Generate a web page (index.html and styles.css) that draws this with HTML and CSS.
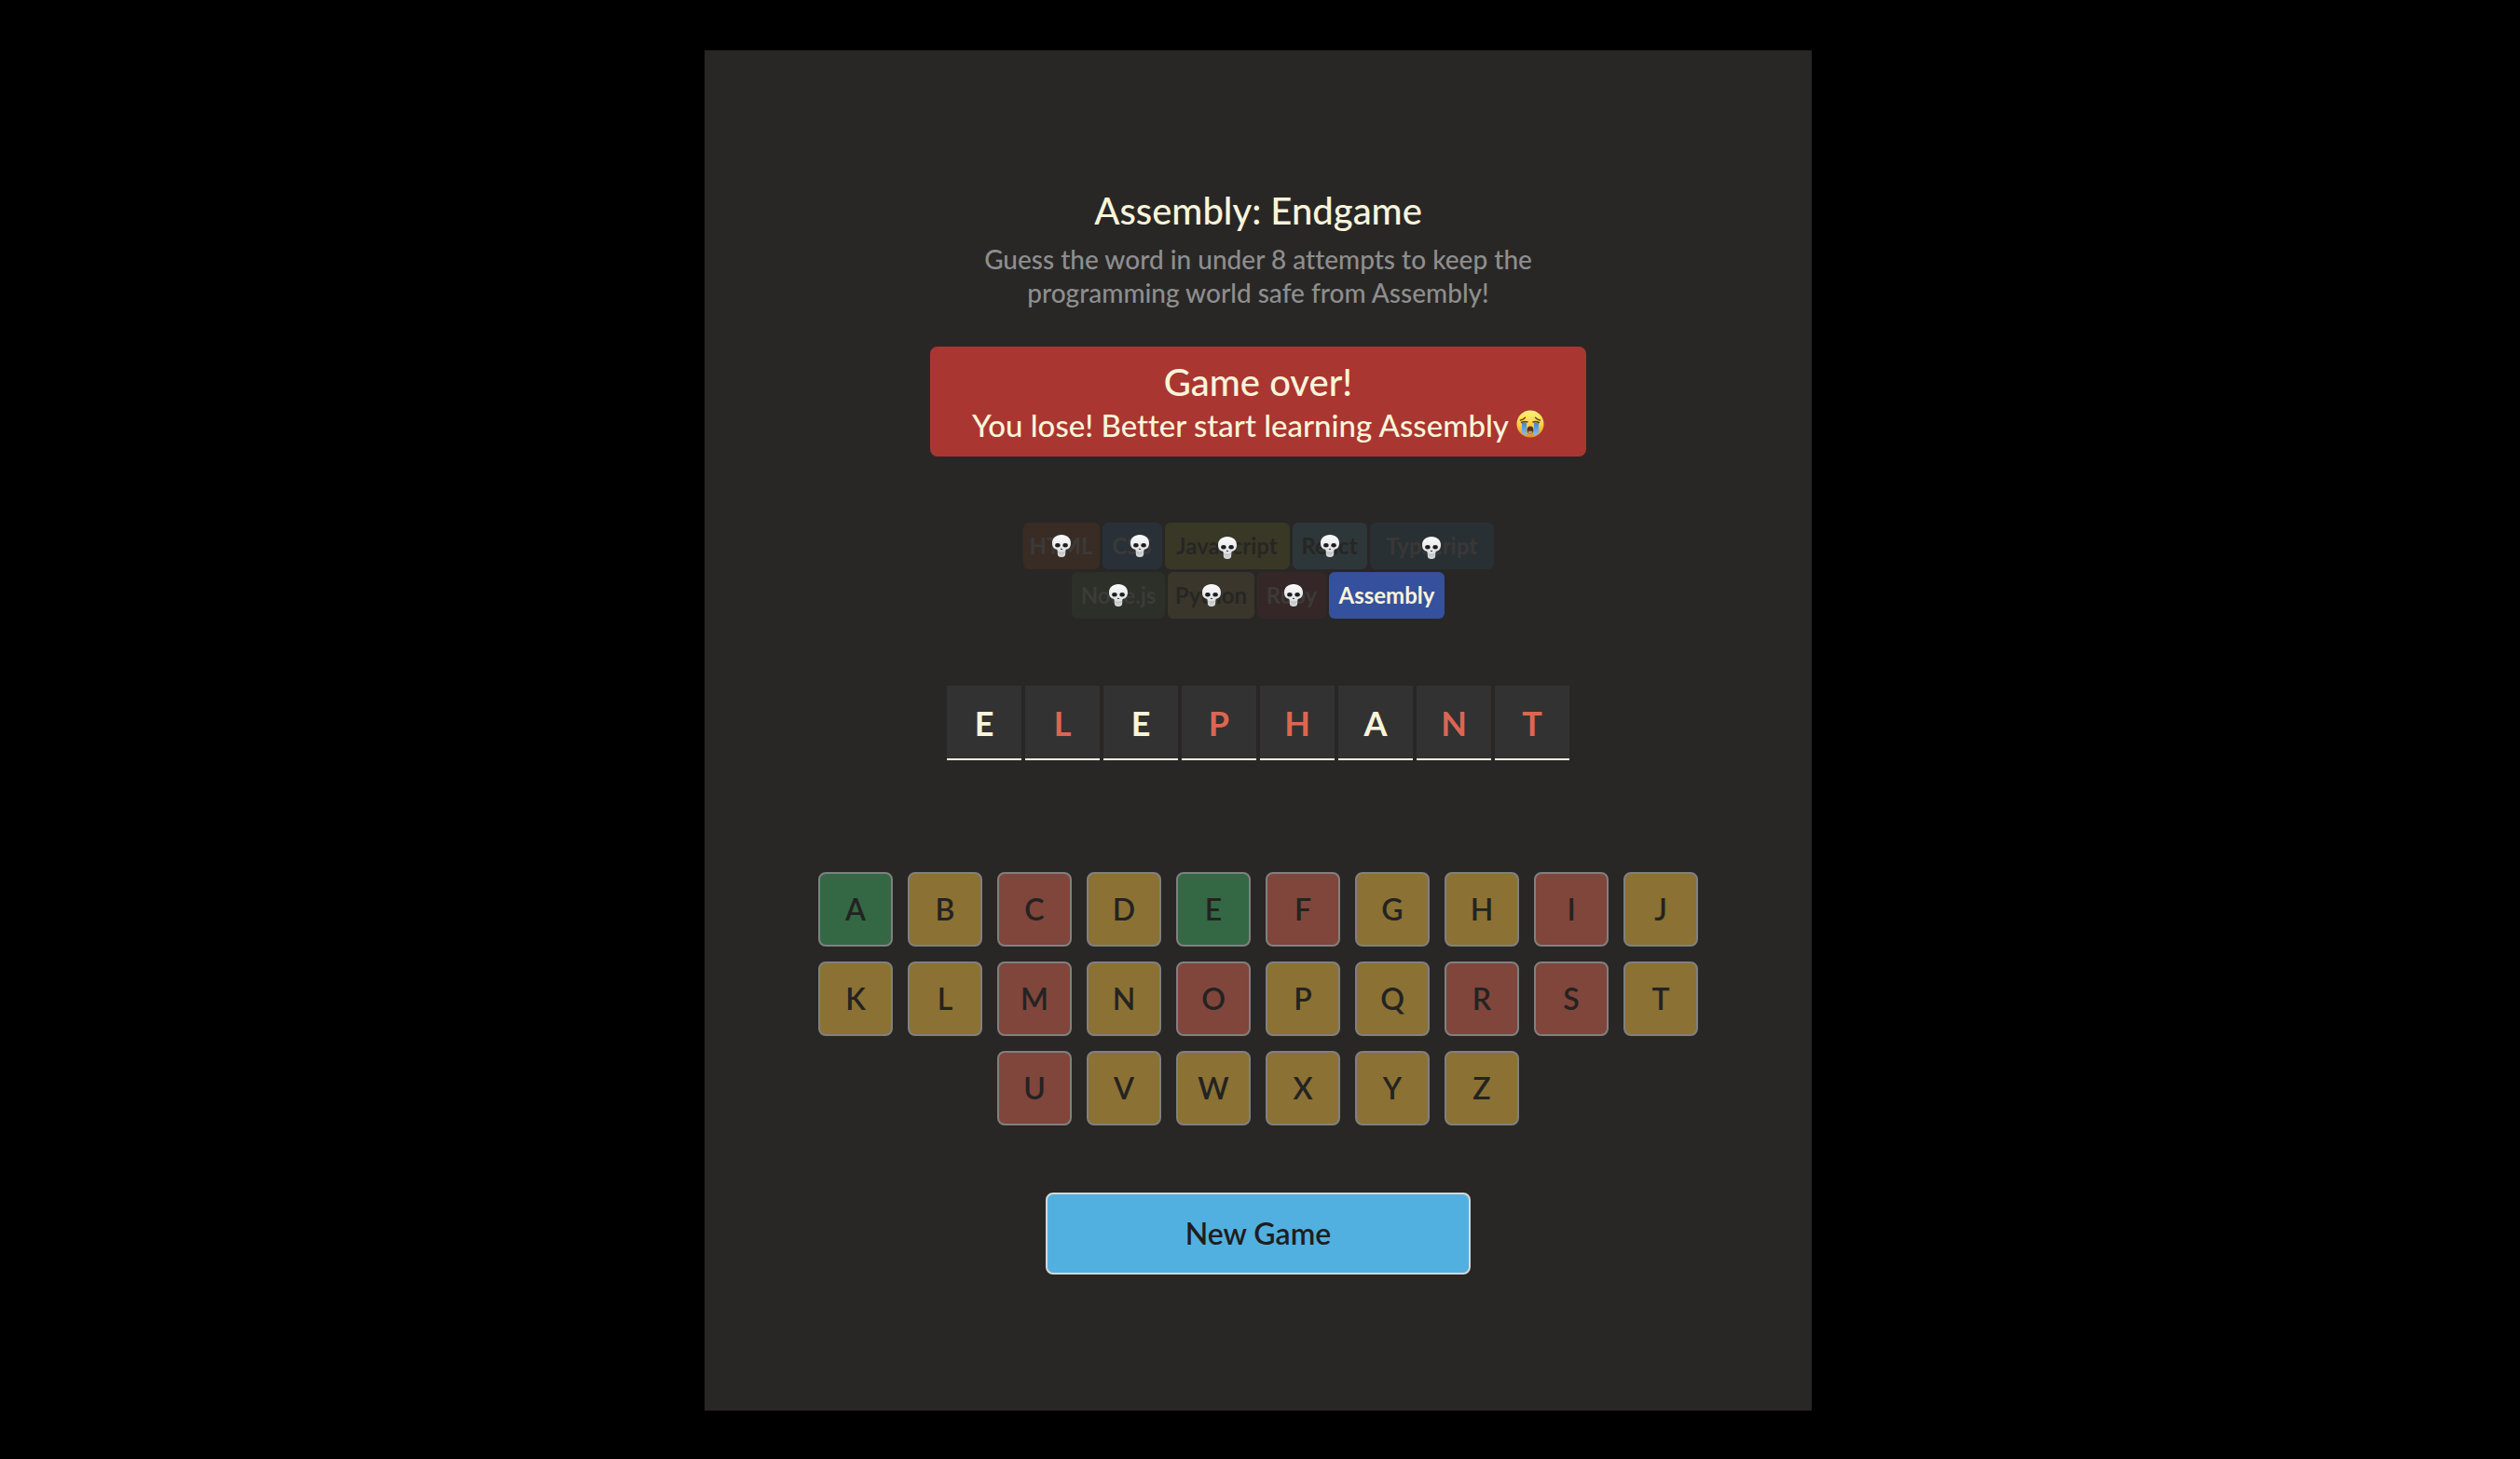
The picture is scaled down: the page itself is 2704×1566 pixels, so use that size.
FILE: index.html
```html
<!DOCTYPE html>
<html lang="en">
<head>
<meta charset="utf-8">
<title>Assembly: Endgame</title>
<link rel="stylesheet" href="styles.css">
</head>
<body>
<svg class="sprite" aria-hidden="true">
  <defs>
    <linearGradient id="bone" x1="0" y1="0" x2="0" y2="1"><stop offset="0" stop-color="#fbfbfb"/><stop offset="1" stop-color="#d4d7da"/></linearGradient>
    <linearGradient id="face" x1="0" y1="0" x2="0" y2="1"><stop offset="0" stop-color="#fff27a"/><stop offset="0.55" stop-color="#fbcd45"/><stop offset="1" stop-color="#dd8f22"/></linearGradient>
    <linearGradient id="tear" x1="0" y1="0" x2="0" y2="1"><stop offset="0" stop-color="#3f83d8"/><stop offset="1" stop-color="#8cc0f3"/></linearGradient>
  </defs>
  <symbol id="skull" viewBox="0 0 20 24">
    <path fill="url(#bone)" d="M10 0C4 0 0 3.600 0 8.800c0 2.300.6 4.200 1.800 5.500.8.900 2 1 3 1.400.7.300.8 1 .9 2l.2 3.300C6 23 7.300 24 10 24s4-1 4.100-3l.2-3.300c.1-1 .2-1.700.9-2 1-.4 2.200-.5 3-1.400C19.400 13 20 11.100 20 8.800 20 3.600 16 0 10 0z"/>
    <ellipse cx="5.900" cy="11.300" rx="2.700" ry="2.200" fill="#1d1d1d"/>
    <ellipse cx="14.100" cy="11.300" rx="2.700" ry="2.200" fill="#1d1d1d"/>
    <path fill="#222" d="M10 14.400l1.300 1.600H8.700z"/>
    <path fill="none" stroke="#a9acaf" stroke-width="0.600" d="M6 18.600q4 1.200 8 0M8 19v2.500M10 19.300v2.700M12 19v2.500"/>
  </symbol>
  <symbol id="sob" viewBox="0 0 30 30">
    <circle cx="15" cy="15" r="14.500" fill="url(#face)"/>
    <path fill="url(#tear)" d="M6 13.500h5V27.800q-3-1-5-3.300zM19 13.500h5v11q-2 2.300-5 3.300z"/>
    <path fill="none" stroke="#6b4310" stroke-width="1.500" stroke-linecap="round" d="M5.500 13.500q3-1.500 6.500-.6M24.500 13.500q-3-1.500-6.500-.6M4.500 11q3-.6 5-2.800M25.500 11q-3-.6-5-2.800"/>
    <ellipse cx="15" cy="21.500" rx="3.400" ry="4" fill="#5a3512"/>
    <path fill="#c99a76" d="M12.500 23.500q2.500-2 5 0-.8 2-2.500 2t-2.500-2z"/>
  </symbol>
</svg>
<main class="game">
  <header class="intro">
    <h1>Assembly: Endgame</h1>
    <p>Guess the word in under 8 attempts to keep the programming world safe from Assembly!</p>
  </header>
  <section class="status" role="status">
    <h2>Game over!</h2>
    <p>You lose! Better start learning Assembly <svg class="sob" role="img" aria-label="Crying"><use href="#sob"/></svg></p>
  </section>
  <ul class="languages">
    <li class="chip html">HTML<svg class="skull"><use href="#skull"/></svg></li>
    <li class="chip css">CSS<svg class="skull"><use href="#skull"/></svg></li>
    <li class="chip javascript">JavaScript<svg class="skull"><use href="#skull"/></svg></li>
    <li class="chip react">React<svg class="skull"><use href="#skull"/></svg></li>
    <li class="chip typescript">Typscript<svg class="skull"><use href="#skull"/></svg></li>
    <li class="chip node">Node.js<svg class="skull"><use href="#skull"/></svg></li>
    <li class="chip python">Python<svg class="skull"><use href="#skull"/></svg></li>
    <li class="chip ruby">Ruby<svg class="skull"><use href="#skull"/></svg></li>
    <li class="chip assembly">Assembly</li>
  </ul>
  <section class="word" aria-label="Word">
    <span>E</span><span class="missed">L</span><span>E</span><span class="missed">P</span><span class="missed">H</span><span>A</span><span class="missed">N</span><span class="missed">T</span>
  </section>
  <section class="keyboard" aria-label="Keyboard">
    <button class="key right" disabled>A</button>
    <button class="key" disabled>B</button>
    <button class="key wrong" disabled>C</button>
    <button class="key" disabled>D</button>
    <button class="key right" disabled>E</button>
    <button class="key wrong" disabled>F</button>
    <button class="key" disabled>G</button>
    <button class="key" disabled>H</button>
    <button class="key wrong" disabled>I</button>
    <button class="key" disabled>J</button>
    <button class="key" disabled>K</button>
    <button class="key" disabled>L</button>
    <button class="key wrong" disabled>M</button>
    <button class="key" disabled>N</button>
    <button class="key wrong" disabled>O</button>
    <button class="key" disabled>P</button>
    <button class="key" disabled>Q</button>
    <button class="key wrong" disabled>R</button>
    <button class="key wrong" disabled>S</button>
    <button class="key" disabled>T</button>
    <button class="key wrong" disabled>U</button>
    <button class="key" disabled>V</button>
    <button class="key" disabled>W</button>
    <button class="key" disabled>X</button>
    <button class="key" disabled>Y</button>
    <button class="key" disabled>Z</button>
  </section>
  <button class="new-game">New Game</button>
</main>
</body>
</html>
```
FILE: styles.css
```css
* { box-sizing: border-box; }

body {
  margin: 0;
  padding: 54px 4px 52px 0;
  background: #000;
  color: #f9f4da;
  font-family: Lato, "Liberation Sans", sans-serif;
  font-weight: 500;
  font-variant-ligatures: none;
}

h1, h2, p, ul { margin: 0; padding: 0; font-weight: 500; }

button { font-family: inherit; }

.sprite { position: absolute; width: 0; height: 0; }

.game {
  display: flex;
  flex-direction: column;
  align-items: center;
  width: 100%;
  max-width: 1188px;
  margin: 0 auto;
  padding: 148px 80px 146px;
  background: #282726;
}

.intro {
  max-width: 704px;
  text-align: center;
}

.intro h1 { font-size: 40px; line-height: 48px; }

.intro p {
  max-width: 640px;
  margin-top: 10px;
  color: #8e8e8e;
  font-size: 28px;
  line-height: 36px;
}

.status {
  width: 100%;
  max-width: 704px;
  margin-top: 40px;
  padding: 14px 16px 12px;
  border-radius: 8px;
  background: #aa3631;
  text-align: center;
}

.status h2 { font-size: 40px; line-height: 48px; }

.status p {
  display: flex;
  justify-content: center;
  gap: 8px;
  font-size: 33px;
  line-height: 44px;
}

.sob { width: 30px; height: 30px; margin-top: 6px; }

.languages {
  display: flex;
  flex-wrap: wrap;
  justify-content: center;
  gap: 3px;
  width: 100%;
  max-width: 540px;
  margin-top: 71px;
  list-style: none;
}

.chip {
  position: relative;
  height: 50px;
  border-radius: 6px;
  font-size: 24px;
  font-weight: 700;
  line-height: 50px;
  text-align: center;
}

.skull {
  position: absolute;
  inset: 0;
  width: 20px;
  height: 24px;
  margin: auto;
}

.html { width: 82px; background: #392c25; color: #3c3a38; }
.css { width: 64px; background: #2a3038; color: #3a3a3a; }
.javascript { width: 134px; background: #393826; color: #272624; }
.react { width: 80px; background: #2d3739; color: #272624; }
.typescript { width: 133px; background: #293033; color: #3a3836; }
.node { width: 100px; background: #2d3029; color: #3c3b38; }
.python { width: 93px; background: #3a362c; color: #272624; }
.ruby { width: 74px; background: #352727; color: #3c3a38; }
.assembly { width: 124px; background: #35509d; color: #f9f4da; }

.css .skull { left: 16px; }
.ruby .skull { left: 4px; }
.javascript .skull, .typescript .skull { top: 4px; }

.word {
  display: flex;
  justify-content: center;
  gap: 4px;
  margin-top: 72px;
}

.word span {
  width: 80px;
  height: 80px;
  border-bottom: 2px solid #f9f4da;
  background: #323232;
  font-size: 36px;
  font-weight: 700;
  line-height: 80px;
  text-align: center;
}

.word .missed { color: #db6651; }

.keyboard {
  display: flex;
  flex-wrap: wrap;
  justify-content: center;
  gap: 16px;
  width: 100%;
  max-width: 960px;
  margin-top: 120px;
}

.key {
  width: 80px;
  height: 80px;
  padding: 0 0 2px;
  border: 2px solid #808080;
  border-radius: 8px;
  background: #8b7133;
  color: #232322;
  font-size: 32px;
  font-weight: 600;
}

.right { background: #346844; }
.wrong { background: #80453b; }

.new-game {
  width: 100%;
  max-width: 456px;
  height: 88px;
  margin-top: 72px;
  padding: 0 0 2px;
  border: 2px solid #d7d7d7;
  border-radius: 8px;
  background: #52b0e0;
  color: #1e1e1e;
  font-size: 32px;
  font-weight: 600;
}
```
